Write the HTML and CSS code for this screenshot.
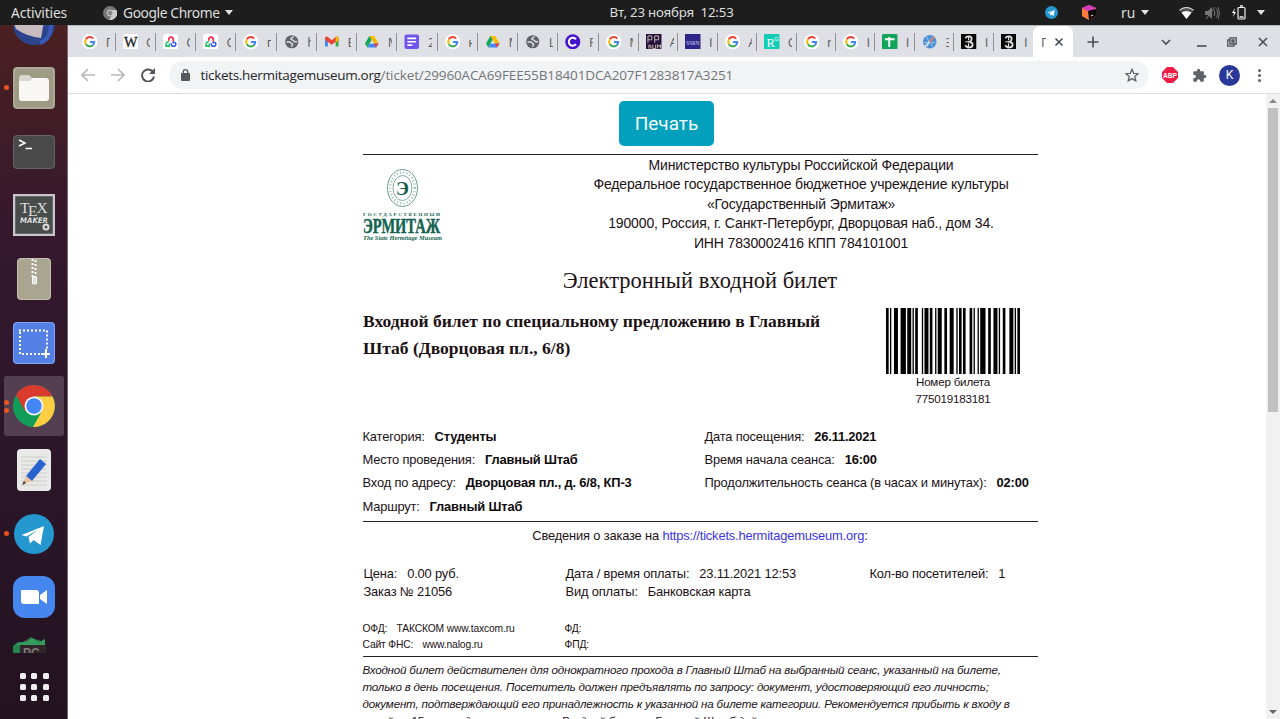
FILE: index.html
```html
<!DOCTYPE html>
<html lang="ru">
<head>
<meta charset="utf-8">
<title>Печать билета</title>
<link rel="stylesheet" href="styles.css">
</head>
<body>
<svg width="0" height="0" class="defs">
  <symbol id="g" viewBox="0 0 16 16"><circle cx="8" cy="8" r="8" fill="#fff"/><g fill="none" stroke-width="2.1"><path d="M11.6 4.7A4.7 4.7 0 0 0 4 5.5" stroke="#ea4335"/><path d="M4 5.5a4.7 4.7 0 0 0 0 5" stroke="#fbbc05"/><path d="M4 10.500a4.700 4.700 0 0 0 7.200 1.100" stroke="#34a853"/><path d="M11.200 11.600a4.700 4.700 0 0 0 1.400-3.300H8.200" stroke="#4285f4"/></g></symbol>
  <symbol id="ams" viewBox="0 0 16 16"><rect width="16" height="16" rx="3" fill="#fff"/><g fill="none" stroke-width="1.6"><path d="M6 7V5.500a2.300 2.300 0 0 1 4.600 0V8" stroke="#f02745"/><path d="M6 8C3.800 8 3 10 3 12.500h3.500V10" stroke="#21c063"/><path d="M8.300 9.500c0 4 5 4 5 1 0-2-2.300-2.500-3.300-1" stroke="#3455f0"/></g></symbol>
  <symbol id="globe" viewBox="0 0 16 16"><circle cx="8" cy="8" r="6.800" fill="#5f6368"/><path d="M2.500 8.200h3.200c1.500 0 1.300 1.500 2.500 1.800s.5 2-.7 3.200M9.800 2.500c-.2 1.500-2.800 1-2.800 2.500 0 1.700 2.500.5 3 2s2 1.200 3.500.8" stroke="#dee1e6" stroke-width="1.500" fill="none"/></symbol>
  <symbol id="drive" viewBox="0 0 16 16"><path d="M5.500 2h5L5.800 9.800 3.500 14 1 9.800z" fill="#18a85b"/><path d="M5.500 2h5L15 9.800h-4.800z" fill="#fbbc04"/><path d="M3.600 14 6 9.800h9L12.500 14z" fill="#4285f4"/><path d="m15 9.800-2.500 4.200-2.300-4.200z" fill="#ea4335"/><path d="m8 6.200 2 3.600H6z" fill="#dee1e6"/></symbol>
  <symbol id="herm" viewBox="0 0 16 16"><rect width="16" height="16" fill="#080808"/><g fill="none" stroke="#ddd"><path d="M4.500 4.500C6 1.500 11 2 11 5c0 1.500-1 2.500-2 3 2 .5 3 1.500 3 3 0 3.500-6 4-7.500.5" stroke-width="1.900"/><path d="M4.500 8H10M7.800 2.500v4M7.800 9.500v4" stroke-width="1.200"/></g></symbol>
  <symbol id="tg" viewBox="0 0 40 40"><circle cx="20" cy="20" r="20" fill="#2497cf"/><path d="M7.500 21 30 12l-3.500 19-7-5-3.500 3.500-1.500-6.500 9-7-11 6.500z" fill="#fff"/></symbol>
</svg>

<header class="topbar">
  <span class="activities">Activities</span>
  <svg class="mini-chrome" viewBox="0 0 14 14"><circle cx="7" cy="7" r="7" fill="#777"/><path d="M7 4h6.500A7 7 0 0 1 6 14l3.500-6" fill="#ccc"/><circle cx="7" cy="7" r="3" fill="#888" stroke="#ccc"/></svg>
  <span class="appname">Google Chrome</span><i class="caret"></i>
  <span class="clock">Вт, 23 ноября&nbsp; 12:53</span>
  <svg class="tray-tg"><use href="#tg"/></svg>
  <svg class="tray-box" viewBox="0 0 15 15"><path d="m7 0 7 3v8l-7 4-7-4V3z" fill="#f04a74"/><path d="m0 3 7 3v9l-7-4z" fill="#fa7a3c"/><path d="m7 0 7 3-7 4-7-4z" fill="#d13ebb"/><path d="m6 6 8-2v7l-7 4z" fill="#090909"/><path d="m9 11 2-1" stroke="#fff"/></svg>
  <span class="lang">ru</span><i class="caret caret-lang"></i>
  <svg class="wifi" viewBox="0 0 15 12"><path d="M0 3q7.500-6 15 0L7.500 12z" fill="#555"/><path d="M2.500 5.500q5-3 10 0l-5 6.500z" fill="#fff"/><path d="M.5 3q7-5 14 0" stroke="#eee" fill="none"/></svg>
  <svg class="sound" viewBox="0 0 15 14"><path d="M0 5h3l4-4v12L3 9H0z" fill="#777"/><path d="M9 4q2 3 0 6M11 2.500q3.500 4.500 0 9M13 1q3 6 0 12M1 13 10 1" fill="none" stroke="#777"/></svg>
  <svg class="battery" viewBox="0 0 14 15"><path d="M3 3 0 8h2l-1 4 3-5H2z" fill="#fff"/><rect x="6" y="2.500" width="7" height="11.500" rx="1" fill="none" stroke="#eee" stroke-width="1.200"/><path d="M8 1h3M7.500 12h4" stroke="#eee" stroke-width="1.300"/></svg>
  <i class="caret caret-end"></i>
</header>

<div class="desktop">
  <aside class="dock">
    <div class="dock-list">
      <div class="app"><svg viewBox="0 0 42 42"><circle cx="21" cy="21" r="21" fill="#2a458c"/><path d="M0 18h31l-3 17q-13-1-25-9z" fill="#c9bcc0"/><path d="M27 40q12-4 11-22" fill="none" stroke="#395bb5" stroke-width="4"/></svg></div>
      <div class="app run"><svg viewBox="0 0 42 42"><rect width="42" height="42" rx="4" fill="#9d9a86"/><rect x="1" y="1" width="40" height="40" rx="4" fill="none" stroke="#b9b6a5"/><path d="M6 12q0-4 3-4h7l3 3h9v8H6z" fill="#dad8ce"/><path d="M6 14h11l3-3h13q3 0 3 3v17q0 3-3 3H9q-3 0-3-3z" fill="#f8f7f3"/></svg></div>
      <div class="app"><svg viewBox="0 0 42 42"><rect y="4" width="42" height="34" rx="4" fill="#484948"/><rect x=".5" y="4.500" width="41" height="33" rx="4" fill="none" stroke="#646464"/><path d="m6 9 6 3-6 3" fill="none" stroke="#fff" stroke-width="1.500"/><path d="M12.500 17.500H19" stroke="#fff" stroke-width="1.500"/></svg></div>
      <div class="app"><svg viewBox="0 0 42 42"><rect x="1" y="1" width="40" height="40" fill="#484c4b" stroke="#c7c7cb" stroke-width="2.500"/><g fill="#ddd"><text y="19" class="tex" x="7 15 23.500" dy="0 3 -3">TEX</text><text x="7" y="29" class="maker" textLength="28" lengthAdjust="spacingAndGlyphs">MAKER</text></g><circle cx="33" cy="33" r="2.500" fill="none" stroke="#ddd" stroke-width="2"/></svg></div>
      <div class="app"><svg viewBox="0 0 42 42"><rect x="4" width="34" height="42" rx="4" fill="#a9a591"/><rect x="4.500" y=".5" width="33" height="41" rx="4" fill="none" stroke="#c4c1b3"/><path d="M19.500 1v19M22.500 2v19" stroke="#fff" stroke-width="2" stroke-dasharray="2 2"/><rect x="19.500" y="19" width="4" height="7" rx="1" fill="#ddd" stroke="#fff"/></svg></div>
      <div class="app"><svg viewBox="0 0 42 42"><rect width="42" height="42" rx="4" fill="#5480e6"/><rect x=".5" y=".5" width="41" height="41" rx="4" fill="none" stroke="#84a5f0"/><path d="M6 8.500h28v18M7 10v22h21" fill="none" stroke="#fff" stroke-width="2" stroke-dasharray="2 2"/><path d="M28 32h9M33 27v9" stroke="#fff" stroke-width="2"/></svg></div>
      <div class="app run twice active"><svg viewBox="0 0 42 42"><circle cx="21" cy="21" r="21" fill="#109d58"/><path d="M21 21 12 26 3 10a21 21 0 0 1 36.500 1.500H21z" fill="#d93b2f"/><path d="M21 11.500h18.500A21 21 0 0 1 20 42l9-16z" fill="#ffcd41"/><circle cx="21" cy="21" r="9.500" fill="#f3f3f5"/><circle cx="21" cy="21" r="7.700" fill="#4285f4"/></svg></div>
      <div class="app"><svg viewBox="0 0 42 42"><rect x="4" width="34" height="42" rx="4" fill="#e9e9e7"/><path d="M8 8h26M8 12h26M8 16h26M8 20h26M8 24h26M8 28h26M8 32h26M8 36h26" stroke="#cccdcb"/><path d="m13 27 14-17 6 5-14 17z" fill="#2961cf"/><path d="m13 27 6 5-9 3z" fill="#eac19a"/><path d="m11 32 2 2-4 2z" fill="#333"/></svg></div>
      <div class="app run"><svg viewBox="-1 -1 42 42"><use href="#tg" width="40" height="40"/></svg></div>
      <div class="app"><svg viewBox="0 0 42 42"><rect width="42" height="42" rx="12" fill="#4687ef"/><path d="M8 14h15q3 0 3 3v11H11q-3 0-3-3z" fill="#fff"/><path d="m27 19 7-5v14l-7-5z" fill="#fff"/></svg></div>
      <div class="app last-app"><svg viewBox="0 0 42 42"><path d="M0 11 5 7h9l5-4 9 3 4-2v16H0z" fill="#278251"/><path d="m2 10 8-3 8-5 8 6 6-4v8z" fill="#3fae67" opacity=".6"/><rect x="7" y="10" width="26" height="12" fill="#302528"/><text x="10" y="22" class="pc">PC</text></svg></div>
    </div>
    <div class="apps-grid"><i></i><i></i><i></i><i></i><i></i><i></i><i></i><i></i><i></i></div>
  </aside>

  <section class="browser">
    <nav class="tabs">
      <div class="tab"><svg><use href="#g"/></svg><b>Г</b></div>
      <div class="tab"><svg viewBox="0 0 16 16"><rect width="16" height="16" rx="3" fill="#fff"/><text x="1" y="13" class="wiki" textLength="14" lengthAdjust="spacingAndGlyphs">W</text></svg><b>С</b></div>
      <div class="tab"><svg><use href="#ams"/></svg><b>С</b></div>
      <div class="tab"><svg><use href="#ams"/></svg><b>С</b></div>
      <div class="tab"><svg><use href="#g"/></svg><b>г</b></div>
      <div class="tab"><svg><use href="#globe"/></svg><b>h</b></div>
      <div class="tab"><svg viewBox="0 0 16 16"><path d="M1 3.500V13h3V7z" fill="#4285f4"/><path d="M12 7v6h3V3.500z" fill="#34a853"/><path d="M1 4q1-2 3-1l4 3.500L12 3q2-1 3 1v2l-7 5-7-5z" fill="#ea4335"/><path d="m12 3 3-.5V7l-3 2z" fill="#fbbc04"/></svg><b>E</b></div>
      <div class="tab"><svg><use href="#drive"/></svg><b>M</b></div>
      <div class="tab"><svg viewBox="0 0 16 16"><rect x=".5" y=".5" width="15" height="15" rx="2" fill="#7154ec"/><path d="M3.500 4.500h9M3.500 8h9M3.500 11.500h5" stroke="#fff" stroke-width="1.700"/></svg><b>2</b></div>
      <div class="tab"><svg><use href="#g"/></svg><b>н</b></div>
      <div class="tab"><svg><use href="#drive"/></svg><b>M</b></div>
      <div class="tab"><svg><use href="#globe"/></svg><b>L</b></div>
      <div class="tab"><svg viewBox="0 0 16 16"><circle cx="8" cy="8" r="7.800" fill="#4612cd"/><path d="M11.300 5.500a4.100 4.100 0 1 0 0 5" fill="none" stroke="#fff" stroke-width="2.100"/></svg><b>F</b></div>
      <div class="tab"><svg><use href="#g"/></svg><b>M</b></div>
      <div class="tab narrow"><svg viewBox="0 0 16 16"><rect width="16" height="16" fill="#24133e"/><path d="M2 9V2h4v4H2m7 3V2h4v4H9M3 11v4m0-3h2v3m2-4v4h3v-4m2 4v-4l2 2 1-2v4" stroke="#c9baa4" fill="none"/></svg><b>A</b></div>
      <div class="tab narrow"><svg viewBox="0 0 16 16"><rect width="16" height="16" fill="#2e2589"/><text x="1" y="11" class="ssrn" textLength="14" lengthAdjust="spacingAndGlyphs">SSRN</text></svg><b>I</b></div>
      <div class="tab narrow"><svg><use href="#g"/></svg><b>A</b></div>
      <div class="tab narrow"><svg viewBox="0 0 16 16"><rect width="16" height="16" rx="1" fill="#12ceb4"/><text x="2.500" y="13" class="rg">R</text><text x="10.500" y="7" class="rgsmall">G</text></svg><b>C</b></div>
      <div class="tab narrow"><svg><use href="#g"/></svg><b>n</b></div>
      <div class="tab narrow"><svg><use href="#g"/></svg><b>I</b></div>
      <div class="tab narrow"><svg viewBox="0 0 16 16"><rect width="16" height="16" rx="1.500" fill="#12a45b"/><path d="M3 5.500h10M7.500 3v10.500" stroke="#fff" stroke-width="2"/></svg><b>I</b></div>
      <div class="tab narrow"><svg viewBox="0 0 16 16"><circle cx="8" cy="8" r="7" fill="#4a8fd4"/><path d="m4 2 3 5m5-4L8 7m-6 2 5-1m2 0 5 1M5 14l2-5m2 0 2 4" stroke="#9fc4e8" stroke-width="1.100"/><path d="m8 8 5-5" stroke="#e4754f" stroke-width="1.500"/><path d="m8 8-5 5" stroke="#eee" stroke-width="1.500"/></svg><b>З</b></div>
      <div class="tab narrow"><svg><use href="#herm"/></svg><b>I</b></div>
      <div class="tab narrow last"><svg><use href="#herm"/></svg><b>I</b></div>
      <div class="tab current"><b>Г</b><svg class="x" viewBox="0 0 10 10"><path d="m1.500 1.500 7 7m0-7-7 7"/></svg></div>
      <svg class="plus" viewBox="0 0 12 12"><path d="M6 .5v11M.5 6h11"/></svg>
      <svg class="chev" viewBox="0 0 10 10"><path d="m1 3 4 4 4-4"/></svg>
      <svg class="min" viewBox="0 0 10 10"><path d="M0 9h9.500"/></svg>
      <svg class="max" viewBox="0 0 10 10"><path d="M3 .8h6.200V7H3zM3 3H.8v6.200H7V7M5 3h2v2H5z"/></svg>
      <svg class="close" viewBox="0 0 10 10"><path d="m1 1 8 8m0-8-8 8"/></svg>
    </nav>
    <div class="toolbar">
      <svg class="back" viewBox="0 0 14 14"><path d="M14 7H1.500m5.500-6L1 7l6 6"/></svg>
      <svg class="fwd" viewBox="0 0 14 14"><path d="M0 7h12.500M7 1l6 6-6 6"/></svg>
      <svg class="reload" viewBox="0 0 14 14"><path d="M12.300 4.500A6 6 0 1 0 13 8.500" fill="none" stroke="#505358" stroke-width="1.900"/><path d="M14 0v6H8z" fill="#505358"/></svg>
      <div class="address">
        <svg class="lock" viewBox="0 0 9 12"><rect y="4" width="9" height="8" rx="1" fill="#55585d"/><path d="M2.200 5V3a2.300 2.300 0 0 1 4.600 0v2" fill="none" stroke="#55585d" stroke-width="1.300"/></svg>
        <span class="url"><span class="host">tickets.hermitagemuseum.org</span><span class="path">/ticket/29960ACA69FEE55B18401DCA207F1283817A3251</span></span>
        <svg class="star" viewBox="0 0 14 14"><path d="m7 1.300 1.700 4 4.400.4-3.300 2.900 1 4.300L7 10.600l-3.800 2.300 1-4.300L.9 5.700l4.400-.4z" fill="none" stroke="#5f6368" stroke-width="1.300"/></svg>
      </div>
      <svg class="abp" viewBox="0 0 16 16"><path d="M5 0h6l5 5v6l-5 5H5l-5-5V5z" fill="#ed1e45"/><text x="1" y="10.700" textLength="14" lengthAdjust="spacingAndGlyphs">ABP</text></svg>
      <svg class="puzzle" viewBox="0 0 24 24"><path fill="#5f6368" d="M20.500 11H19V7c0-1.100-.9-2-2-2h-4V3.500a2.500 2.500 0 0 0-5 0V5H4c-1.100 0-2 .9-2 2v3.800h1.500a2.700 2.700 0 0 1 0 5.400H2V20c0 1.100.9 2 2 2h3.800v-1.500a2.700 2.700 0 0 1 5.400 0V22H17c1.100 0 2-.9 2-2v-4h1.500a2.500 2.500 0 0 0 0-5z"/></svg>
      <span class="avatar">K</span>
      <span class="dots"><i></i><i></i><i></i></span>
    </div>

    <div class="viewport">
      <main class="page">
        <button class="print">Печать</button>
        <article class="ticket">
          <div class="org">
            <svg class="logo" viewBox="0 0 80 74"><g fill="none" stroke="#2f6f60"><ellipse cx="39.500" cy="19" rx="15" ry="18.500" stroke-width=".7"/><ellipse cx="39.500" cy="19" rx="9.500" ry="12.500" stroke-width=".6"/><ellipse cx="39.500" cy="19" rx="12.300" ry="15.500" stroke-width="2.300" stroke-dasharray="1 2.300" opacity=".5"/></g><g fill="#14634f"><text x="33" y="26" class="logo-e">Э</text><text x="0" y="46.500" class="logo-top" textLength="77">ГОСУДАРСТВЕННЫЙ</text><text x="0" y="63.500" class="logo-main" textLength="77" lengthAdjust="spacingAndGlyphs">ЭРМИТАЖ</text><text x="0" y="70.500" class="logo-en" textLength="79" lengthAdjust="spacingAndGlyphs">The State Hermitage Museum</text></g></svg>
            <div class="org-text"><p>Министерство культуры Российской Федерации</p><p>Федеральное государственное бюджетное учреждение культуры</p><p>«Государственный Эрмитаж»</p><p>190000, Россия, г. Санкт-Петербург, Дворцовая наб., дом 34.</p><p>ИНН 7830002416 КПП 784101001</p></div>
          </div>
          <h1>Электронный входной билет</h1>
          <div class="event">
            <h2>Входной билет по специальному предложению в Главный<br>Штаб (Дворцовая пл., 6/8)</h2>
            <div class="code">
              <svg class="bars" viewBox="0 0 101 50" preserveAspectRatio="none"><path d="M0 0h2v50h-2zM3 0h1v50h-1zM6 0h3v50h-3zM11 0h4v50h-4zM16 0h3v50h-3zM20 0h1v50h-1zM22 0h2v50h-2zM27 0h1v50h-1zM29 0h3v50h-3zM33 0h2v50h-2zM37 0h1v50h-1zM39 0h3v50h-3zM44 0h2v50h-2zM48 0h3v50h-3zM53 0h1v50h-1zM55 0h2v50h-2zM58 0h2v50h-2zM63 0h2v50h-2zM66 0h1v50h-1zM69 0h1v50h-1zM71 0h4v50h-4zM77 0h2v50h-2zM81 0h3v50h-3zM85 0h1v50h-1zM88 0h2v50h-2zM93 0h3v50h-3zM97 0h1v50h-1zM99 0h2v50h-2z"/></svg>
              <p>Номер билета</p><p>775019183181</p>
            </div>
          </div>
          <div class="details">
            <div><p>Категория: <b>Студенты</b></p><p>Место проведения: <b>Главный Штаб</b></p><p>Вход по адресу: <b>Дворцовая пл., д. 6/8, КП-3</b></p><p>Маршрут: <b>Главный Штаб</b></p></div>
            <div><p>Дата посещения: <b>26.11.2021</b></p><p>Время начала сеанса: <b>16:00</b></p><p>Продолжительность сеанса (в часах и минутах): <b>02:00</b></p></div>
          </div>
          <p class="order-title">Сведения о заказе на <a>https://tickets.hermitagemuseum.org</a>:</p>
          <div class="order">
            <div><p>Цена: <span>0.00 руб.</span></p><p>Заказ № 21056</p></div>
            <div><p>Дата / время оплаты: <span>23.11.2021 12:53</span></p><p>Вид оплаты: <span>Банковская карта</span></p></div>
            <div><p>Кол-во посетителей: <span>1</span></p></div>
          </div>
          <div class="fiscal">
            <div><p>ОФД: <span>ТАКСКОМ www.taxcom.ru</span></p><p>Сайт ФНС: <span>www.nalog.ru</span></p></div>
            <div><p>ФД:</p><p>ФПД:</p></div>
          </div>
          <div class="rules"><p>Входной билет действителен для однократного прохода в Главный Штаб на выбранный сеанс, указанный на билете,</p><p>только в день посещения. Посетитель должен предъявлять по запросу: документ, удостоверяющий его личность;</p><p>документ, подтверждающий его принадлежность к указанной на билете категории. Рекомендуется прибыть к входу в</p><p>музей за 15 минут до начала сеанса. Входной билет в Главный Штаб действителен с момента начала сеанса и в течение</p></div>
        </article>
      </main>
      <div class="scroll"><i class="up"></i><div class="thumb"></div><i class="down"></i></div>
    </div>
  </section>
</div>
</body>
</html>
```
FILE: styles.css
```css
* { box-sizing: border-box; }
body { margin: 0; width: 1280px; height: 719px; overflow: hidden; display: flex; flex-direction: column; font-family: "Liberation Sans", sans-serif; color: #1c1115; background: #fff; }
p, h1, h2 { margin: 0; font-weight: normal; white-space: nowrap; }
svg { display: block; flex: none; }
.defs { position: absolute; }

.topbar { height: 25px; flex: none; background: #1d1d1d; color: #dedede; display: flex; align-items: center; font: 13.800px/25px "Noto Sans", "Open Sans", sans-serif; padding-left: 11px; white-space: nowrap; }
.topbar span { flex: none; }
.activities { width: 92px; letter-spacing: -0.15px; }
.mini-chrome { width: 14px; height: 14px; margin-right: 6px; }
.appname { width: 102px; letter-spacing: -0.4px; }
.caret { border: 4.500px solid transparent; border-top: 5px solid #e3e3e3; border-bottom: 0; flex: none; }
.clock { margin-left: 376.500px; width: 435.500px; font-size: 13.300px; letter-spacing: -0.2px; }
.tray-tg { width: 13px; height: 13px; margin-right: 24px; }
.tray-box { width: 15px; height: 15px; }
.lang { margin-left: 24px; width: 20px; }
.wifi { width: 15px; height: 12px; margin-left: 30px; }
.sound { width: 15px; height: 14px; margin-left: 11px; }
.battery { width: 14px; height: 15px; margin-left: 12px; }
.caret-end { margin-left: 11px; }

.desktop { display: flex; flex: 1; min-height: 0; }
.dock { width: 68px; flex: none; background: linear-gradient(#4b2022, #35182d 30%, #2b1629 65%, #22131f); border-right: 1px solid #77696f; display: flex; flex-direction: column; overflow: hidden; }
.dock-list { height: 628px; flex: none; overflow: hidden; display: flex; flex-direction: column; }
.app { height: 63.700px; flex: none; position: relative; display: flex; align-items: center; justify-content: center; }
.app:first-child { margin-top: -32.700px; }
.app svg { width: 42px; height: 42px; }
.last-app { height: 54px; }
.run::before { content: ""; position: absolute; left: 4px; top: 29px; width: 5px; height: 5px; border-radius: 50%; background: #e95420; }
.twice::before { top: 24px; box-shadow: 0 8px #e95420; }
.active { background: #533f51; width: 60px; height: 60px; margin: 2px 4px 1.700px; border-radius: 3px; }
.active::before { left: 0; }
.tex { font: 15.500px "Liberation Serif", serif; }
.maker { font: italic bold 7.500px "DejaVu Sans", sans-serif; }
.pc { font: bold 12px "Liberation Sans", sans-serif; fill: #817a7b; }
.apps-grid { display: grid; grid-template-columns: repeat(3, 6px); gap: 5px 5.500px; margin: 20px 0 0 19.500px; }
.apps-grid i { height: 6px; background: #eee; border-radius: 1.500px; }

.browser { flex: 1; min-width: 0; display: flex; flex-direction: column; }
.tabs { height: 32px; flex: none; background: #dee0e5; border-top: 1px solid #b4b5b9; padding-left: 7.300px; display: flex; align-items: center; }
.tab { width: 40.270px; height: 18px; flex: none; border-right: 1px solid #909297; display: flex; align-items: center; padding-left: 7px; gap: 8px; }
.tab svg { width: 15.500px; height: 15.500px; }
.tab b { font: 13px/16px "Open Sans", "Noto Sans", sans-serif; color: #5a5d62; width: 4px; overflow: hidden; }
.narrow { width: 39.400px; }
.last { border-right: 0; }
.current { background: #fff; height: 31px; border: 0; border-radius: 7px 7px 0 0; padding-left: 8px; width: 40px; }
.current svg.x { width: 10px; height: 10px; }
.current b { width: 5px; }
.x path, .plus path, .chev path, .min path, .max path, .close path { fill: none; stroke: #4a4d52; stroke-width: 1.600; }
.plus { width: 12px; height: 12px; margin-left: 14px; }
.chev { width: 10px; height: 10px; margin-left: 62px; }
.min { width: 10px; height: 10px; margin-left: 26px; }
.max { width: 10px; height: 10px; margin-left: 20px; }
.max path { stroke-width: 1.300; }
.close { width: 10px; height: 10px; margin-left: 21px; }
.wiki { font: 14px "Liberation Serif", serif; fill: #222; stroke: #222; stroke-width: .3px; }
.ssrn { font: 7px "Liberation Serif", serif; fill: #d6d3ef; }
.rg { font: 13px "Liberation Serif", serif; fill: #fff; }
.rgsmall { font: 6px "Liberation Sans", sans-serif; fill: #fff; }

.toolbar { height: 37px; flex: none; border-bottom: 1px solid #dcdee0; display: flex; align-items: center; padding-left: 13px; }
.toolbar .back, .toolbar .fwd, .toolbar .reload { width: 14px; height: 14px; }
.back path, .fwd path { fill: none; stroke: #b6b8ba; stroke-width: 1.600; }
.fwd { margin-left: 16px; }
.reload { margin-left: 16px; }
.address { margin-left: 14px; width: 980px; height: 28px; border-radius: 14px; background: #f1f3f4; display: flex; align-items: center; padding-left: 12px; }
.lock { width: 9px; height: 12px; }
.url { margin-left: 10.500px; width: 924.500px; font: 13.500px/28px "Open Sans", "Noto Sans", sans-serif; white-space: nowrap; }
.host { color: #25272b; letter-spacing: -0.32px; }
.path { color: #72757a; letter-spacing: -0.13px; }
.star { width: 14px; height: 14px; }
.abp { width: 16px; height: 16px; margin-left: 13px; }
.abp text { font: bold 7.500px "Liberation Sans", sans-serif; fill: #fff; }
.puzzle { width: 15px; height: 15px; margin-left: 14px; }
.avatar { width: 21px; height: 21px; border-radius: 50%; background: #293898; color: #fff; font: 12px/21px Roboto, sans-serif; text-align: center; margin-left: 12px; }
.dots { margin-left: 18px; display: flex; flex-direction: column; gap: 2px; }
.dots i { width: 3px; height: 3px; border-radius: 50%; background: #5f6368; }

.viewport { flex: 1; min-height: 0; display: flex; }
.page { flex: 1; overflow: hidden; padding: 7px 229px 0 294.500px; }
.print { display: block; width: 95px; height: 45px; margin-left: 256.500px; padding: 0; border: 0; border-radius: 5px; background: #03a0be; color: #f5fcfd; font: 19px/45px Roboto, sans-serif; }
.ticket { width: 675px; margin-top: 7.500px; border-top: 1px solid #242023; }
.org { display: flex; height: 102px; padding-top: 1px; }
.logo { width: 80px; height: 74px; margin: 13px 122px 0 0; }
.logo-e { font: bold 19px "Liberation Serif", serif; }
.logo-top { font: bold 5px "Liberation Serif", serif; }
.logo-main { font: bold 22px "Liberation Serif", serif; stroke: #14634f; stroke-width: .5px; }
.logo-en { font: italic bold 6.500px "Liberation Serif", serif; }
.org-text { width: 473px; text-align: center; font-size: 14px; letter-spacing: -0.14px; line-height: 19.650px; }
h1 { font: 22.500px/34px "Liberation Serif", serif; text-align: center; margin-top: 7.500px; }
.event { display: flex; height: 117.500px; margin-top: 9px; }
h2 { font: bold 17.500px/26.500px "Liberation Serif", serif; width: 523.500px; padding: 1px 0 0 0.500px; }
.code { width: 134px; flex: none; padding-top: 1px; font-size: 11.600px; letter-spacing: -0.2px; line-height: 16.700px; text-align: center; display: flex; flex-direction: column; }
.bars { width: 134px; height: 66px; }
.details { display: grid; grid-template-columns: 342px 1fr; font-size: 12.900px; letter-spacing: -0.17px; line-height: 23.400px; border-bottom: 1px solid #242023; height: 97px; }
.details b { margin-left: 6.500px; color: #100b0d; }
.order-title { text-align: center; font-size: 12.900px; letter-spacing: -0.17px; line-height: 28px; }
.order-title a { color: #3c35e5; }
.order { display: grid; grid-template-columns: 202px 304px 1fr; padding-left: 1px; margin-top: 15px; font-size: 12.900px; letter-spacing: -0.17px; line-height: 18.700px; }
.order span, .fiscal span { margin-left: 6.500px; }
.fiscal { display: grid; grid-template-columns: 202px 1fr; margin-top: 19.500px; height: 36px; font-size: 10.300px; letter-spacing: -0.15px; line-height: 15.300px; border-bottom: 1px solid #242023; }
.rules { font-size: 11.600px; letter-spacing: -0.19px; line-height: 16.900px; font-style: italic; padding-top: 5px; }

.scroll { width: 14px; flex: none; background: #f1f1f1; display: flex; flex-direction: column; align-items: center; }
.up { border: 4px solid transparent; border-bottom: 4px solid #888; border-top: 0; margin: 5px 0; }
.thumb { width: 10px; height: 304px; background: #c1c1c1; }
.down { border: 4px solid transparent; border-top: 4px solid #666; border-bottom: 0; margin-top: auto; margin-bottom: 5px; }
```
